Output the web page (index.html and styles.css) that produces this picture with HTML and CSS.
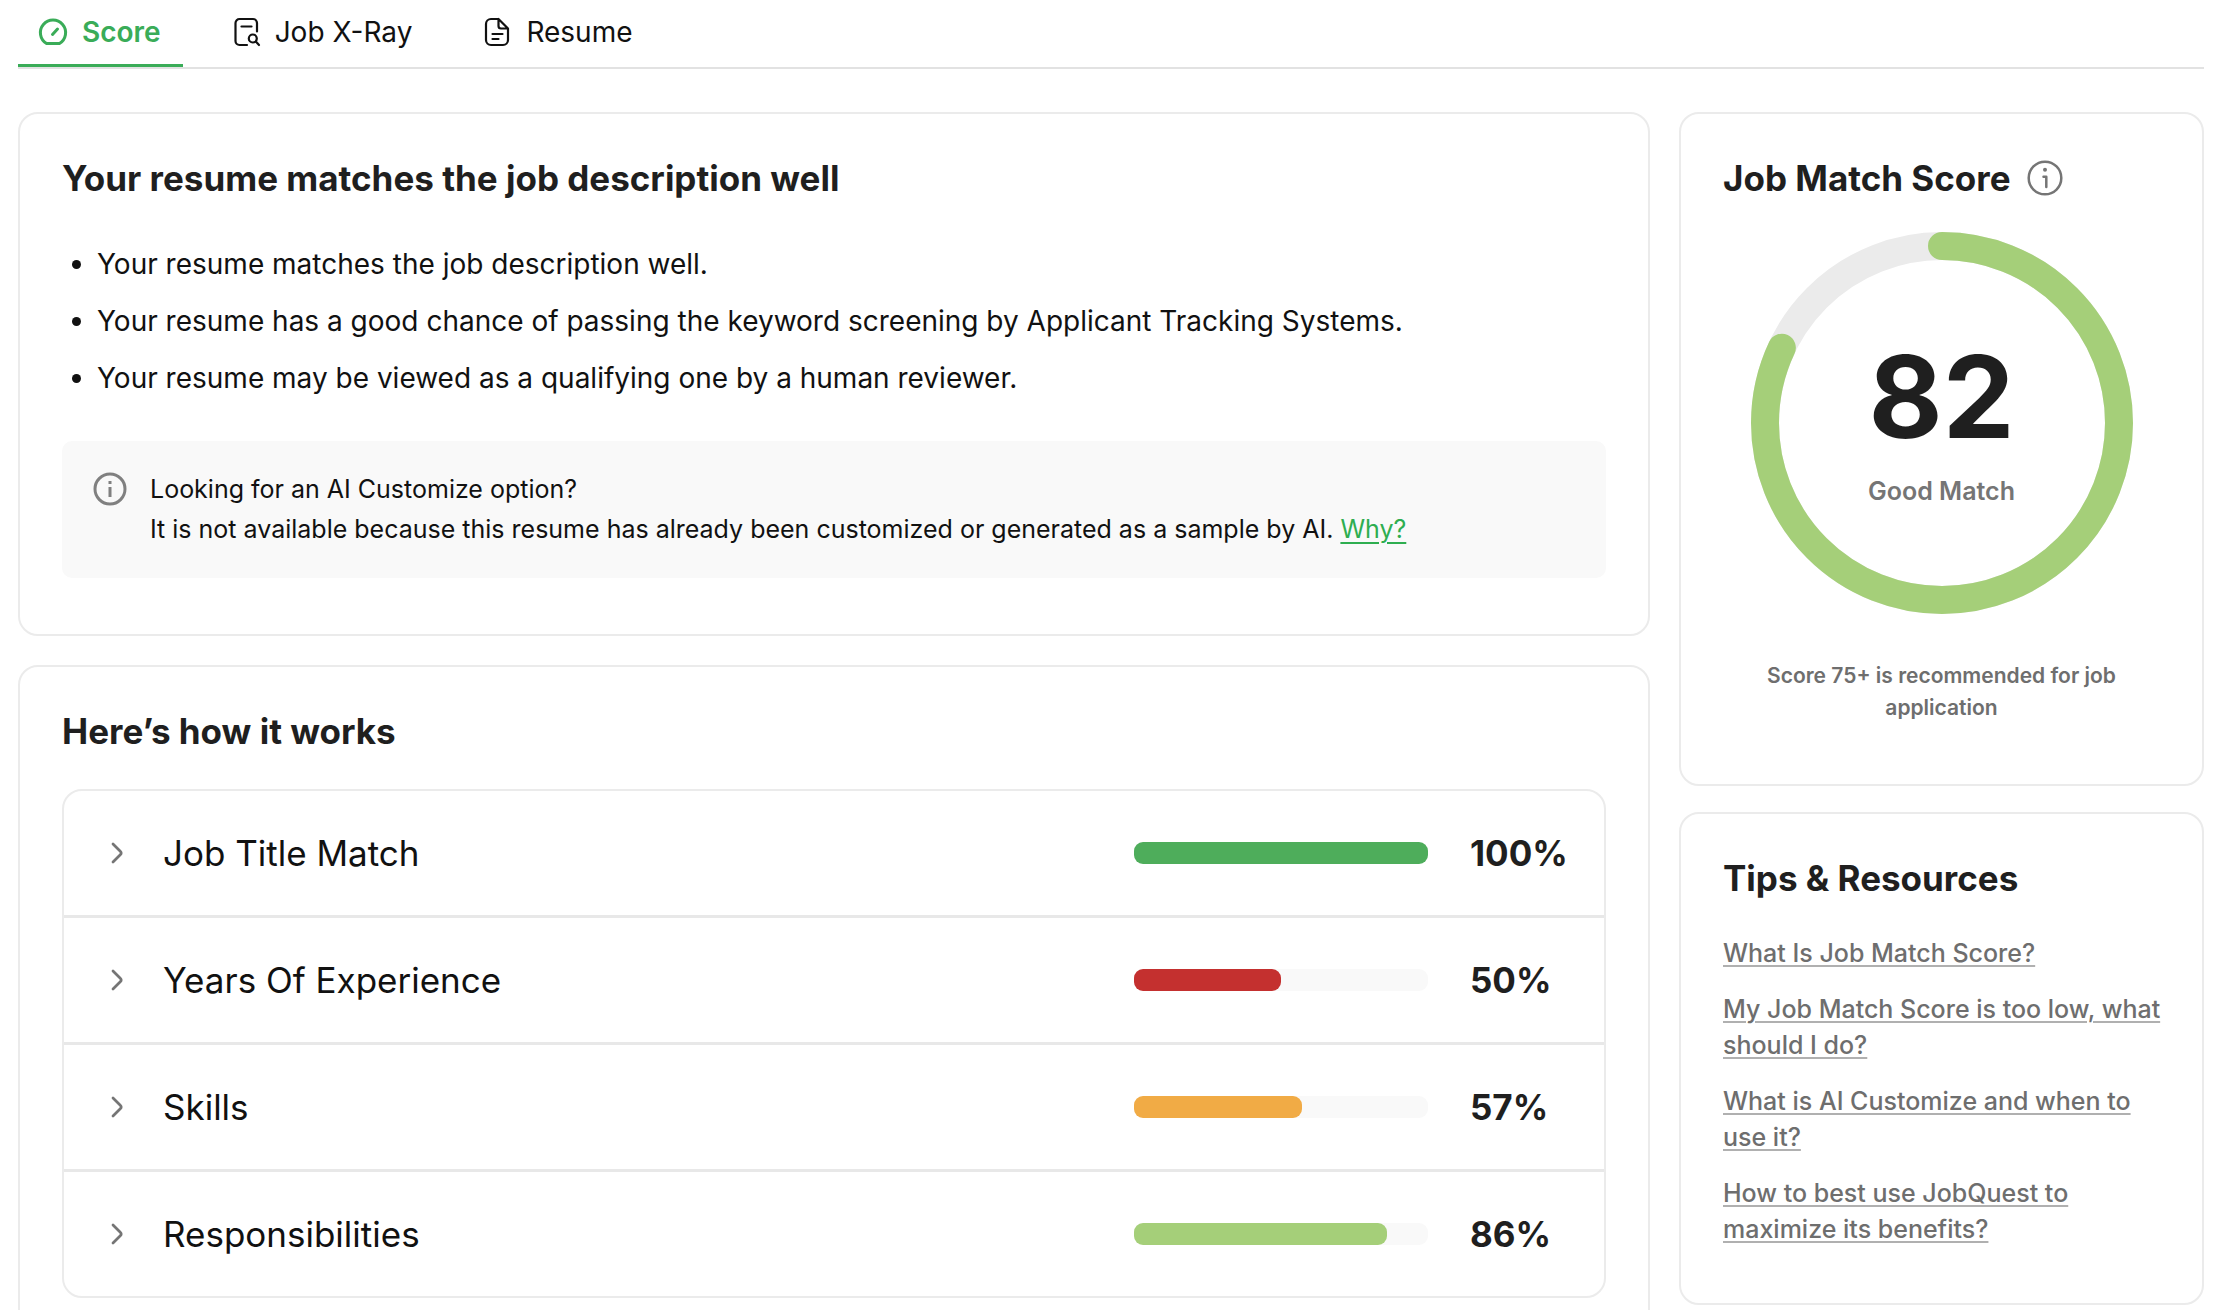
FILE: index.html
```html
<!DOCTYPE html>
<html lang="en">
<head>
<meta charset="utf-8">
<meta name="viewport" content="width=device-width, initial-scale=1">
<title>Job Match Score</title>
<link rel="stylesheet" href="styles.css">
</head>
<body>
<nav class="tabs" aria-label="Sections">
  <a class="tab tab-active" href="#score" aria-current="page">
    <svg class="tab-icon" viewBox="0 0 32 32" fill="none" stroke="currentColor" stroke-width="3" stroke-linecap="round" stroke-linejoin="round" aria-hidden="true"><path d="M9.500 27.500A12.600 12.600 0 1 1 22.500 27.500Z"/><path d="M15.500 18.500l5-5.500"/></svg>
    Score
  </a>
  <a class="tab" href="#xray">
    <svg class="tab-icon" viewBox="0 0 32 32" fill="none" stroke="currentColor" stroke-width="2.200" stroke-linecap="round" stroke-linejoin="round" aria-hidden="true"><path d="M17 29H9.500a4 4 0 0 1-4-4V7a4 4 0 0 1 4-4H23a4 4 0 0 1 4 4v8.500"/><path d="M11.500 10.500h10"/><circle cx="22.800" cy="22.500" r="4"/><path d="M25.800 25.500L29 29"/></svg>
    Job X-Ray
  </a>
  <a class="tab" href="#resume">
    <svg class="tab-icon" viewBox="0 0 32 32" fill="none" stroke="currentColor" stroke-width="2.200" stroke-linecap="round" stroke-linejoin="round" aria-hidden="true"><path d="M17.500 3H10a5 5 0 0 0-5 5v16a5 5 0 0 0 5 5h12a5 5 0 0 0 5-5V12.500L17.500 3v7a2.500 2.500 0 0 0 2.500 2.500h7"/><path d="M11.500 18h10M11.500 23h6"/></svg>
    Resume
  </a>
</nav>
<div class="layout">
  <main class="column column-main">
    <section class="card">
      <h2 class="card-title">Your resume matches the job description well</h2>
      <ul class="points">
        <li>Your resume matches the job description well.</li>
        <li>Your resume has a good chance of passing the keyword screening by Applicant Tracking Systems.</li>
        <li>Your resume may be viewed as a qualifying one by a human reviewer.</li>
      </ul>
      <div class="note">
        <svg class="note-icon" viewBox="0 0 36 36" fill="none" stroke="currentColor" stroke-width="3" aria-hidden="true"><circle cx="18" cy="18" r="15"/><path d="M18 16v10M18 10v3"/></svg>
        <p class="note-text">Looking for an AI Customize option?<br>It is not available because this resume has already been customized or generated as a sample by AI. <a class="why" href="#why">Why?</a></p>
      </div>
    </section>
    <section class="card">
      <h2 class="card-title">Here’s how it works</h2>
      <ul class="metrics">
        <li><button class="metric" type="button" aria-expanded="false">
          <svg class="chevron" viewBox="0 0 24 24" fill="none" stroke="currentColor" stroke-width="2.800" stroke-linecap="round" aria-hidden="true"><path d="M8 3l7.500 7.500a2 2 0 0 1 0 3L8 21"/></svg>
          <span class="metric-name">Job Title Match</span>
          <span class="bar"><span class="fill fill-green" style="width:100%"></span></span>
          <span class="metric-value">100%</span>
        </button></li>
        <li><button class="metric" type="button" aria-expanded="false">
          <svg class="chevron" viewBox="0 0 24 24" fill="none" stroke="currentColor" stroke-width="2.800" stroke-linecap="round" aria-hidden="true"><path d="M8 3l7.500 7.500a2 2 0 0 1 0 3L8 21"/></svg>
          <span class="metric-name">Years Of Experience</span>
          <span class="bar"><span class="fill fill-red" style="width:50%"></span></span>
          <span class="metric-value">50%</span>
        </button></li>
        <li><button class="metric" type="button" aria-expanded="false">
          <svg class="chevron" viewBox="0 0 24 24" fill="none" stroke="currentColor" stroke-width="2.800" stroke-linecap="round" aria-hidden="true"><path d="M8 3l7.500 7.500a2 2 0 0 1 0 3L8 21"/></svg>
          <span class="metric-name">Skills</span>
          <span class="bar"><span class="fill fill-orange" style="width:57%"></span></span>
          <span class="metric-value">57%</span>
        </button></li>
        <li><button class="metric" type="button" aria-expanded="false">
          <svg class="chevron" viewBox="0 0 24 24" fill="none" stroke="currentColor" stroke-width="2.800" stroke-linecap="round" aria-hidden="true"><path d="M8 3l7.500 7.500a2 2 0 0 1 0 3L8 21"/></svg>
          <span class="metric-name">Responsibilities</span>
          <span class="bar"><span class="fill fill-lime" style="width:86%"></span></span>
          <span class="metric-value">86%</span>
        </button></li>
      </ul>
    </section>
  </main>
  <aside class="column column-side">
    <section class="card score-card">
      <h2 class="card-title title-with-icon">Job Match Score
        <svg class="title-icon" viewBox="0 0 36 36" fill="none" stroke="currentColor" stroke-width="2.500" stroke-linecap="round" stroke-linejoin="round" aria-hidden="true"><circle cx="18" cy="18" r="16.300"/><path d="M16.500 16.800h2.800v10.200"/><circle cx="18" cy="9.800" r="2" fill="currentColor" stroke="none"/></svg>
      </h2>
      <div class="gauge">
        <svg class="gauge-ring" viewBox="0 0 382 382" fill="none" stroke-width="28" aria-hidden="true"><circle cx="191" cy="191" r="177" stroke="#ebebeb"/><circle cx="191" cy="191" r="177" stroke="#a5cf79" stroke-linecap="round" pathLength="100" stroke-dasharray="82 100" transform="rotate(-90 191 191)"/></svg>
        <div class="gauge-text">
          <span class="gauge-score">82</span>
          <span class="gauge-label">Good Match</span>
        </div>
      </div>
      <p class="advice">Score 75+ is recommended for job application</p>
    </section>
    <section class="card tips-card">
      <h2 class="card-title">Tips &amp; Resources</h2>
      <ul class="tips">
        <li><a class="tip" href="#t1">What Is Job Match Score?</a></li>
        <li><a class="tip" href="#t2">My Job Match Score is too low, what should I do?</a></li>
        <li><a class="tip" href="#t3">What is AI Customize and when to use it?</a></li>
        <li><a class="tip" href="#t4">How to best use JobQuest to maximize its benefits?</a></li>
      </ul>
    </section>
  </aside>
</div>
</body>
</html>
```
FILE: styles.css
```css
*, *::before, *::after { box-sizing: border-box; }

body {
  margin: 0;
  padding: 0 28px 0 18px;
  background: #fff;
  color: #111;
  font-family: Inter, "Liberation Sans", sans-serif;
  font-size: 28px;
}

h2, ul, p { margin: 0; padding: 0; }
ul { list-style: none; }

.tabs {
  display: flex;
  gap: 28px;
  border-bottom: 2px solid #e2e2e2;
}
.tab {
  display: flex;
  align-items: center;
  gap: 13px;
  height: 67px;
  padding: 0 22px 0 19px;
  border-bottom: 3px solid transparent;
  color: #111;
  text-decoration: none;
}
.tab-active {
  border-bottom-color: #3aac58;
  color: #3aac58;
  font-weight: 600;
}
.tab-icon { width: 32px; height: 32px; }

.layout {
  display: grid;
  grid-template-columns: minmax(0, 1fr) 525px;
  align-items: start;
  gap: 29px;
  padding-top: 43px;
}
.column { display: grid; }
.column-main { gap: 29px; }
.column-side { gap: 26px; }

.card {
  padding: 42px 42px 56px;
  border: 2px solid #ebebeb;
  border-radius: 20px;
}
.card-title {
  color: #1f1f1f;
  font-size: 35px;
  font-weight: 700;
  line-height: 44px;
}

.points {
  padding: 44px 0 43px 35px;
  list-style: disc;
  line-height: 40px;
}
.points li + li { margin-top: 17px; }

.note {
  display: flex;
  gap: 22px;
  padding: 28px 30px 29px;
  border-radius: 10px;
  background: #f9f9f9;
}
.note-icon { width: 36px; height: 36px; margin-top: 2px; color: #808080; }
.note-text { font-size: 25px; line-height: 40px; }
.why {
  color: #2eae50;
  text-decoration-thickness: 2px;
  text-underline-offset: 4px;
}

.metrics {
  margin-top: 36px;
  border: 2px solid #ebebeb;
  border-radius: 20px;
  overflow: hidden;
}
.metrics li + li { border-top: 3px solid #e8e8e8; }
.metric {
  display: flex;
  align-items: center;
  width: 100%;
  height: 124px;
  padding: 0 34px 0 41px;
  border: 0;
  background: none;
  color: #111;
  font: inherit;
  font-size: 35px;
  text-align: left;
}
.chevron { width: 24px; height: 24px; margin-right: 34px; color: #757575; }
.metric-name { flex: 1; }
.bar {
  width: 294px;
  height: 22px;
  border-radius: 9px;
  background: #f9f9f9;
}
.fill { display: block; height: 100%; border-radius: inherit; }
.fill-green { background: #4ead5b; }
.fill-red { background: #c4302f; }
.fill-orange { background: #f1ab45; }
.fill-lime { background: #a5cf79; }
.metric-value { width: 100px; margin-left: 42px; color: #1f1f1f; font-weight: 700; }

.score-card { display: grid; justify-items: center; padding-bottom: 60px; }
.title-with-icon {
  display: flex;
  align-items: center;
  justify-self: start;
  gap: 16px;
}
.title-icon { width: 36px; height: 36px; color: #757575; }
.gauge { display: grid; width: 382px; margin-top: 32px; }
.gauge-ring, .gauge-text { grid-area: 1 / 1; }
.gauge-ring { width: 100%; }
.gauge-text {
  display: grid;
  align-content: center;
  justify-items: center;
  gap: 16px;
}
.gauge-score { color: #1f1f1f; font-size: 114px; font-weight: 700; line-height: 120px; }
.gauge-label { color: #757575; font-size: 25px; font-weight: 600; line-height: 36px; }
.advice {
  width: 360px;
  margin-top: 46px;
  color: #6e6e6e;
  font-size: 21px;
  font-weight: 600;
  line-height: 32px;
  text-align: center;
}

.tips-card { padding-right: 32px; }
.tips {
  display: grid;
  gap: 20px;
  padding-top: 35px;
  font-size: 25px;
  font-weight: 500;
  line-height: 36px;
}
.tip {
  color: #6e6e6e;
  text-decoration-color: #b0b0b0;
  text-decoration-thickness: 2px;
  text-underline-offset: 3px;
}
```
